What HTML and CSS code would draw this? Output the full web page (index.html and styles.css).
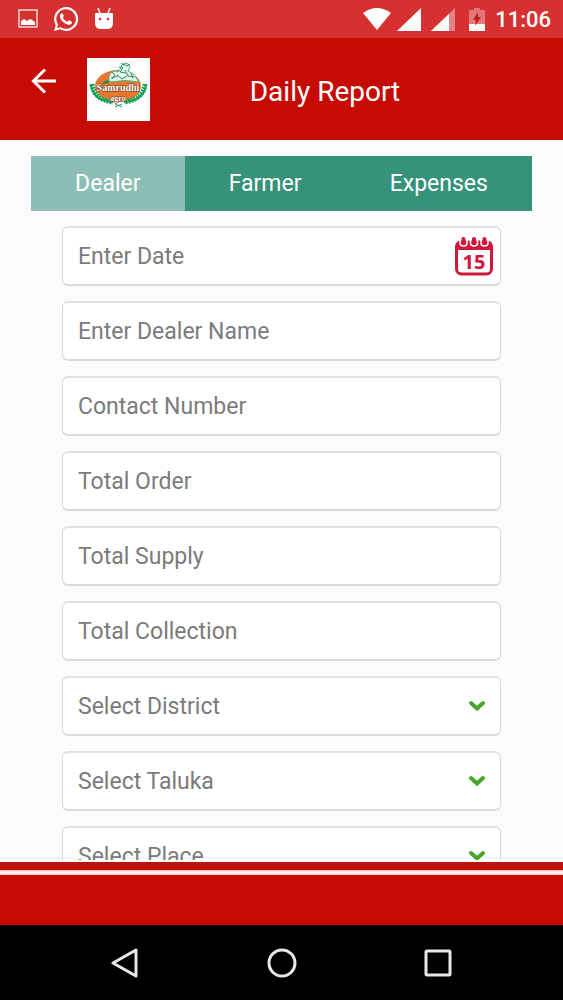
FILE: index.html
```
<!DOCTYPE html>
<html lang="en">

<head>
    <meta charset="utf-8">
    <meta name="viewport" content="width=device-width, initial-scale=1">
    <title>Daily Report</title>
    <link rel="stylesheet" href="styles.css">
</head>

<body>
    <!-- Status bar -->
    <div class="status">
        <svg width="20" height="20" viewBox="0 0 20 20">
            <rect x="1" y="1" width="18" height="17" fill="none" stroke="#fff" stroke-opacity=".85" stroke-width="1.4" />
            <path d="M3 16v-4l3-2 3 2 3-2 2 1 3 2v3z" fill="#fff" />
        </svg>
        <svg width="26" height="26" viewBox="0 0 24 24" fill="#fff">
            <path d="M12 1a11 11 0 0 0-9.500 16.500L1 23l5.700-1.500A11 11 0 1 0 12 1zm0 2a9 9 0 1 1-4.900 16.500L3.800 20.300l.9-3.200A9 9 0 0 1 12 3z" />
            <path d="M8.500 6.800c-.9-.3-2.100 1-2.100 2.400 0 3.500 4.700 8 8.400 8 1.500 0 3-1 2.800-2.500l-2.700-1.500c-.8.100-1.200 1.500-1.900 1.300-1.600-.6-3.200-2.200-3.800-3.700-.1-.6 1-1 .9-1.700z" />
        </svg>
        <svg width="20" height="22" viewBox="0 0 20 22">
            <path d="M4 0l2 5M16 0l-2 5" stroke="#fff" stroke-width="1.500" />
            <path d="M1 6q0-1 1-1h16q1 0 1 1v9q0 6-6 6H7q-6 0-6-6z" fill="#fff" />
            <circle cx="6" cy="11" r="1.300" fill="#d63031" />
            <circle cx="14" cy="11" r="1.300" fill="#d63031" />
        </svg>
        <div class="status-right">
            <svg width="28" height="22" viewBox="0 0 28 22">
                <path d="M0 5Q14-5 28 5L14 22z" fill="#fff" />
            </svg>
            <svg width="24" height="23" viewBox="0 0 24 23">
                <path d="M24 0v23H0z" fill="#fff" />
            </svg>
            <svg class="signal" width="24" height="23" viewBox="0 0 24 23">
                <path d="M24 0v23H0z" fill="#fff" opacity=".4" />
                <path d="M18 6v17H0z" fill="#fff" />
            </svg>
            <svg class="battery" width="16" height="23" viewBox="0 0 16 23">
                <path d="M0 2h5V0h6v2h5v14H0z" fill="#fff" opacity=".35" />
                <path d="M0 16h16v7H0z" fill="#fff" />
                <path d="M9 4l-5 8h3l-1 6 6-9H9z" fill="#b91c1c" />
            </svg>
            <span class="clock">11:06</span>
        </div>
    </div>

    <!-- Header -->
    <header class="header">
        <button class="back" type="button" aria-label="Back">
            <svg width="26" height="26" viewBox="0 0 26 26" fill="none" stroke="#fff" stroke-width="3">
                <path d="M25 13H3M14 1.500L2.500 13 14 24.500" />
            </svg>
        </button>
        <svg class="logo" width="63" height="63" viewBox="0 0 63 63">
            <rect width="63" height="63" fill="#fff" />
            <ellipse cx="31" cy="28" rx="23" ry="16" fill="#e8772e" />
            <!-- Figures -->
            <path d="M22 23q-1-6 3-9 4-2 6 0l3-4q0-4 4-5 4 0 5 4l-2 4q6 2 9 8l2 3q-14-3-28 0z" fill="#e5f4ec" stroke="#4bae86" stroke-width="1" />
            <path d="M25 14l3 3-3 4M32 9l4 1-3 4 6 1M36 6l4 2 3-2M38 12l3 6 6 1M30 17l5 4 5-3M24 20l7-2M44 15l2 5M34 5l3 2" fill="none" stroke="#2a9468" stroke-width="1" />
            <path d="M16 24l5-2 1 3-6 1z" fill="#17934b" />
            <!-- Leaves -->
            <g fill="none" stroke="#18a05a">
                <path d="M4 26q1 16 22 18M59 26q-1 16-22 18" stroke-width="2" />
                <path d="M5 26q2 16 21 18M58 26q-2 16-21 18" stroke-width="5" stroke-dasharray="2 1" />
                <path d="M28 49l7-3M35 49l-7-3" stroke-width="1" />
            </g>
            <g class="logo-text">
                <text x="31" y="33" font-size="10">Samrudhi</text>
                <text x="31" y="43" font-size="8">agro</text>
            </g>
        </svg>
        <h1>Daily Report</h1>
    </header>

    <main class="content">
        <nav class="tabs">
            <button class="tab active" type="button">Dealer</button>
            <button class="tab" type="button">Farmer</button>
            <button class="tab" type="button">Expenses</button>
        </nav>

        <form class="form">
            <div class="field">
                <input type="text" placeholder="Enter Date" aria-label="Enter Date">
                <svg class="calendar" width="38" height="40" viewBox="0 0 38 40">
                    <rect x="1.500" y="6" width="35" height="32" rx="5" fill="#fff" stroke="#d0183c" stroke-width="3" />
                    <path d="M1 14V9q0-4 4-4h28q4 0 4 4v5z" fill="#d0183c" />
                    <path d="M5 3v4q0 3 3.500 3T12 7V3M15.500 3v4q0 3 3.500 3t3.500-3V3M26 3v4q0 3 3.500 3T33 7V3" fill="none" stroke="#fff" stroke-width="1.500" />
                    <g fill="#d0183c">
                        <rect x="6.500" y="1" width="4" height="8" rx="2" />
                        <rect x="17" y="1" width="4" height="8" rx="2" />
                        <rect x="27.500" y="1" width="4" height="8" rx="2" />
                    </g>
                    <text x="19" y="33" class="calendar-day">15</text>
                </svg>
            </div>
            <div class="field"><input type="text" placeholder="Enter Dealer Name" aria-label="Enter Dealer Name"></div>
            <div class="field"><input type="tel" placeholder="Contact Number" aria-label="Contact Number"></div>
            <div class="field"><input type="text" placeholder="Total Order" aria-label="Total Order"></div>
            <div class="field"><input type="text" placeholder="Total Supply" aria-label="Total Supply"></div>
            <div class="field"><input type="text" placeholder="Total Collection" aria-label="Total Collection"></div>
            <div class="field">
                <select aria-label="Select District">
                    <option>Select District</option>
                </select>
                <svg class="arrow" width="16" height="12" viewBox="0 0 16 12">
                    <path d="M2 3l6 5.500L14 3" />
                </svg>
            </div>
            <div class="field">
                <select aria-label="Select Taluka">
                    <option>Select Taluka</option>
                </select>
                <svg class="arrow" width="16" height="12" viewBox="0 0 16 12">
                    <path d="M2 3l6 5.500L14 3" />
                </svg>
            </div>
            <div class="field">
                <select aria-label="Select Place">
                    <option>Select Place</option>
                </select>
                <svg class="arrow" width="16" height="12" viewBox="0 0 16 12">
                    <path d="M2 3l6 5.500L14 3" />
                </svg>
            </div>
        </form>
    </main>

    <footer class="footer"></footer>

    <!-- Navigation buttons -->
    <div class="navbar">
        <button type="button" aria-label="Back">
            <svg width="30" height="30" viewBox="0 0 30 30">
                <path d="M26 2v26L3 15z" />
            </svg>
        </button>
        <button type="button" aria-label="Home">
            <svg width="30" height="30" viewBox="0 0 30 30">
                <circle cx="15" cy="15" r="13" />
            </svg>
        </button>
        <button type="button" aria-label="Recent apps">
            <svg width="30" height="30" viewBox="0 0 30 30">
                <rect x="3" y="3" width="24" height="24" rx="1" />
            </svg>
        </button>
    </div>
</body>

</html>
```

FILE: styles.css
```
* {
    box-sizing: border-box;
}

body {
    margin: 0;
    height: 100vh;
    display: flex;
    flex-direction: column;
    overflow: hidden;
    background: #fcfafc;
    font-family: Roboto, sans-serif;
}

button {
    border: 0;
    padding: 0;
    background: none;
    font: inherit;
    color: inherit;
}

svg {
    display: block;
    flex: none;
}

.status {
    display: flex;
    align-items: center;
    gap: 15px;
    height: 38px;
    padding: 0 12px 0 18px;
    background: #d63031;
    color: #fff;
}

.status-right {
    display: flex;
    align-items: center;
    gap: 6px;
    margin-left: auto;
}

.signal {
    margin-left: 4px;
}

.battery {
    margin: 0 4px 0 8px;
}

.clock {
    font-size: 22px;
    font-weight: 500;
}

.header {
    display: flex;
    align-items: center;
    height: 102px;
    padding: 0 63px 0 31px;
    background: #c60c02;
    color: #fff;
}

.back {
    margin-right: 30px;
    padding-bottom: 16px;
}

.header h1 {
    flex: 1;
    margin: 0;
    padding-top: 4px;
    font-size: 28px;
    font-weight: 400;
    text-align: center;
}

.logo-text {
    fill: #fff;
    stroke: #6b3a20;
    stroke-width: 1px;
    paint-order: stroke;
    font-family: "Liberation Serif", serif;
    font-weight: bold;
    text-anchor: middle;
}

.content {
    flex: 1;
    min-height: 0;
    overflow-y: auto;
    scrollbar-width: none;
    padding: 16px 31px 0;
}

.tabs {
    display: flex;
    background: #369279;
    color: #fff;
}

.tab {
    flex: auto;
    height: 55px;
    padding: 0 40px;
    font-size: 23px;
}

.tab.active {
    background: #8cbeb5;
}

.form {
    display: flex;
    flex-direction: column;
    gap: 15px;
    padding: 15px 31px;
}

.field {
    position: relative;
    height: 60px;
}

.field input,
.field select {
    width: 100%;
    height: 100%;
    padding: 0 15px;
    border: 1px solid #dbd9db;
    border-top: 2px solid #e2e0e2;
    border-bottom: 2px solid #dbd9db;
    border-radius: 6px;
    background: #fff;
    color: #7b7b7b;
    font-family: inherit;
    font-size: 23px;
    appearance: none;
}

.field input::placeholder {
    color: #7b7b7b;
}

.calendar {
    position: absolute;
    right: 8px;
    top: 10px;
    pointer-events: none;
}

.calendar-day {
    fill: #d0183c;
    font-family: "Open Sans", sans-serif;
    font-size: 20px;
    font-weight: bold;
    text-anchor: middle;
}

.arrow {
    position: absolute;
    right: 16px;
    top: 24px;
    fill: none;
    stroke: #4aa52e;
    stroke-width: 4px;
    stroke-linecap: round;
    pointer-events: none;
}

.footer {
    height: 65px;
    border-top: 2px solid #fff;
    background: linear-gradient(#c01208 8px, #f3b5ae 8px, #fff0ee 10px, #fff0ee 12px, #f3b5ae 13px, #c60c02 13px);
}

.navbar {
    display: flex;
    justify-content: space-between;
    align-items: center;
    height: 75px;
    padding: 0 110px;
    background: #000;
}

.navbar svg {
    fill: none;
    stroke: #e8e8e8;
    stroke-width: 3px;
    stroke-linejoin: round;
}
```
